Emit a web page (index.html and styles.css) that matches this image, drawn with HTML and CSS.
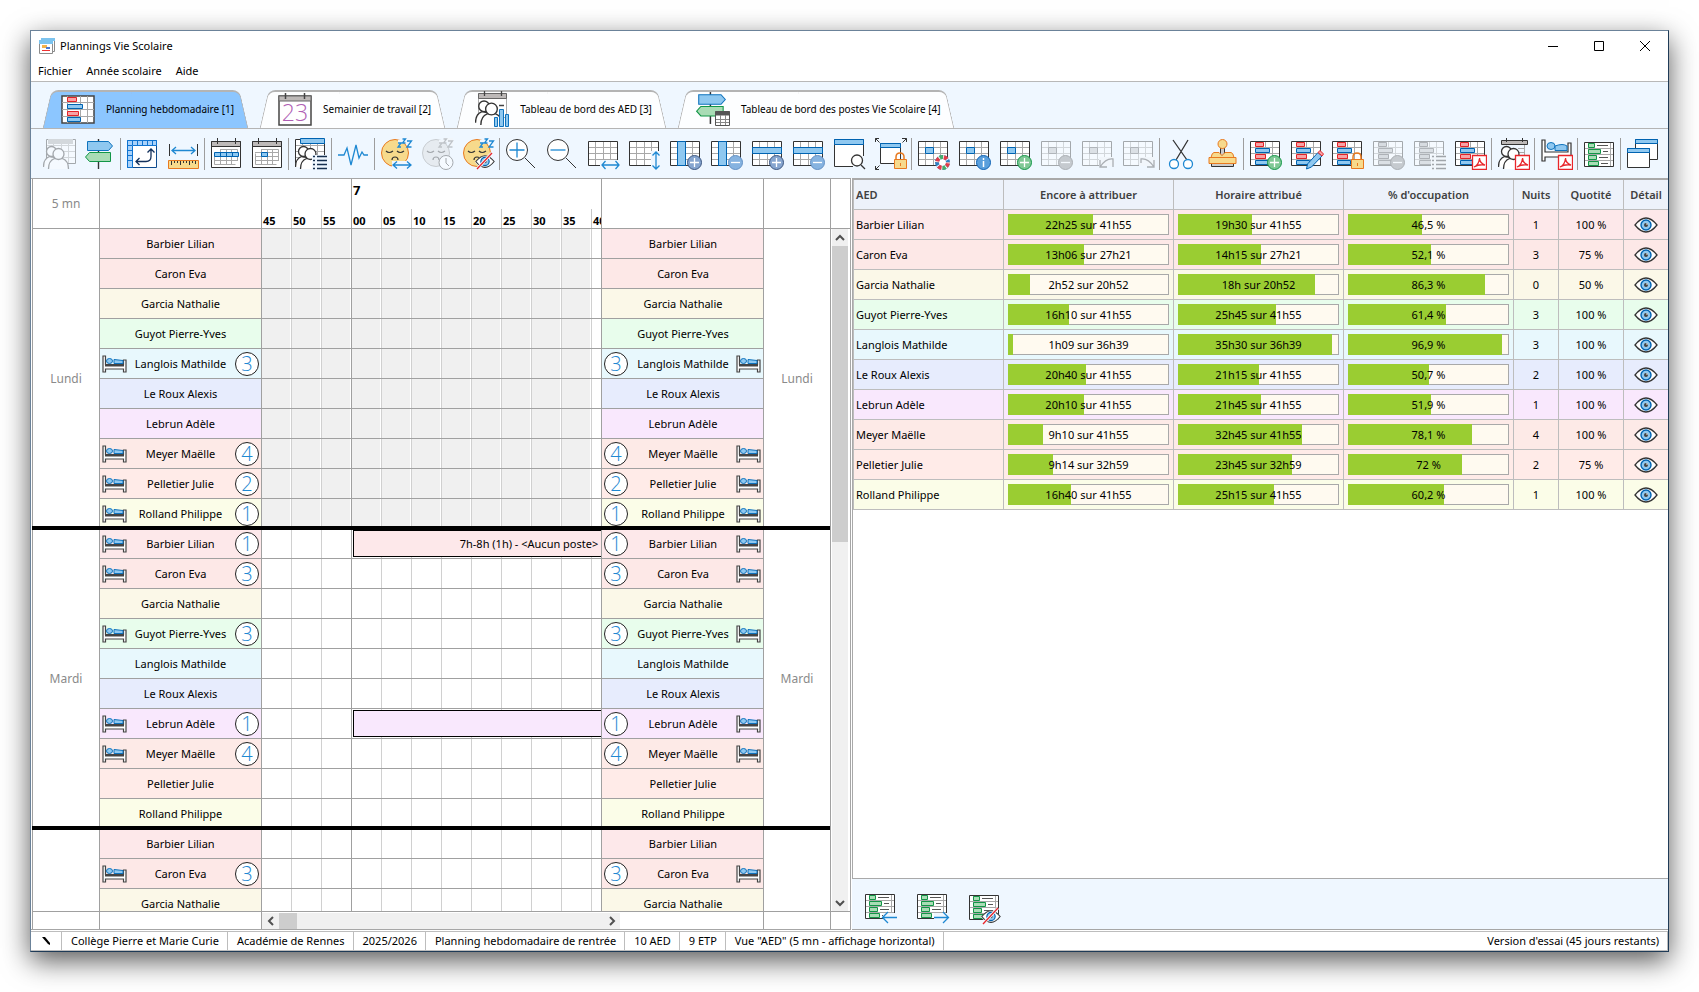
FILE: index.html
```html
<!DOCTYPE html>
<html lang="fr">
<head>
<meta charset="utf-8">
<title>Plannings Vie Scolaire</title>
<link rel="stylesheet" href="styles.css">
</head>
<body>
<svg class="defs" aria-hidden="true">
  <defs>
    <symbol id="grid" viewBox="0 0 32 32"><path fill="#fff" stroke="#333" d="M.5 3.5h29v24H.5z"/><path fill="none" stroke="#a8a8a8" d="M7.5 4v23M15.5 4v23M22.5 4v23M1 9.5h28M1 15.5h28M1 21.5h28"/></symbol>
    <symbol id="gridcell" viewBox="0 0 32 32"><use href="#grid"/><path fill="#8fc8f0" stroke="#0063b1" d="M7.5 9.5h8v6h-8z"/></symbol>
    <symbol id="plan" viewBox="0 0 32 32"><use href="#grid"/><path fill="#f7a3a5" stroke="#e32228" d="M5.5 4.5h8v4h-8zM5.5 16.5h10v4h-10z"/><path fill="#8fc8f0" stroke="#0063b1" d="M5.5 10.5h14v4h-14zM5.5 22.5h13v4h-13z"/></symbol>
    <symbol id="greenlist" viewBox="0 0 32 32"><path fill="#fff" stroke="#333" d="M.5 4.500h29v24H.5z"/><path fill="none" stroke="#a8a8a8" d="M1 10.500h28M1 16.500h28M1 22.500h28M4.500 5v23M26.500 5v23"/><path fill="#a9dcb5" stroke="#129647" d="M4.500 5.500h6v4h-6zM4.500 11.500h12v4h-12zM4.500 17.500h8v4h-8zM4.500 23.500h10v4h-10z"/><path stroke="#555" d="M13 7.500h11M19 13.500h5M15 19.500h9M17 25.500h7"/></symbol>
    <symbol id="cal" viewBox="0 0 32 32"><path fill="#fff" stroke="#333" d="M.5 3.500h29v26H.5z"/><path fill="#bdb9b8" stroke="#333" d="M.5 3.500h29v5H.5z"/><path stroke="#333" d="M6.500 0v6M24.500 0v6"/></symbol>
    <symbol id="people" viewBox="0 0 32 32"><g fill="#fff" stroke="#333" stroke-width="1.300"><path d="M.5 29c0-6 2-9 6-10.500l6 1-5 9.500" stroke-linejoin="round"/><circle cx="8.500" cy="13.500" r="5"/><path d="M5.500 31c0-6 2-9 6-10.500h8c4 1.500 6 4.500 6 10.500"/><circle cx="15.500" cy="16" r="5.500"/></g></symbol>
    <symbol id="sign" viewBox="0 0 32 32"><path stroke="#333" stroke-width="1.400" d="M14.500 1v30"/><path fill="#8fc8f0" stroke="#0f73bd" d="M3.500 3.500h21l4 4.500-4 4.500h-21z"/><path fill="#a9dcb5" stroke="#129647" d="M26.500 14.500h-21l-4 4.500 4 4.500h21z"/></symbol>
    <symbol id="zzz" viewBox="0 0 32 32"><circle cx="14" cy="15" r="13.500" fill="#f7da8c" stroke="#e8791f"/><path fill="none" stroke="#333" stroke-width="1.200" d="M5 13q3 3 7 0M16 13q3 3 7 0M11 22q0-3 3-3t3 3"/><path fill="none" stroke="#eff7ff" stroke-width="4" d="M17 4h5M22 2h7v6"/><path fill="none" stroke="#1e88d2" stroke-width="1.300" d="M17 5h3l-3 4h3M21.500 1h3l-3 4h3M26 3h4.500L26 9h4.500"/></symbol>
    <symbol id="eye" viewBox="0 0 24 16"><path fill="#fff" stroke="#333" stroke-width="1.300" d="M1 8Q12-6 23 8 12 22 1 8z"/><circle cx="12" cy="8" r="5" fill="#8fc8f0" stroke="#0063b1" stroke-width="1.400"/><circle cx="12" cy="8" r="2" fill="#444"/><circle cx="13" cy="7" r=".8" fill="#fff"/></symbol>
    <symbol id="eyeoff" viewBox="0 0 32 32"><path fill="#eff7ff" d="M12 24q10-13 20 0-10 13-20 0z"/><use href="#eye" x="12" y="16" width="20" height="15"/><path stroke="#eff7ff" stroke-width="3" d="M14 31 29 15"/><path stroke="#e8262b" stroke-width="1.300" d="M14 31 29 15"/></symbol>
    <symbol id="lens" viewBox="0 0 32 32"><circle cx="11" cy="12" r="10.500" fill="#fff" stroke="#333"/><path stroke="#333" d="m19 20 10 10"/></symbol>
    <symbol id="lock" viewBox="0 0 32 32"><path fill="none" stroke="#e8791f" stroke-width="1.500" d="M21 22v-3q0-4 4-4t4 4v3"/><path fill="#f7da8c" stroke="#e8791f" d="M19.500 21.500h12v9h-12z"/><path stroke="#e8791f" d="M25.500 25v3"/></symbol>
    <symbol id="pdf" viewBox="0 0 32 32"><path fill="#fff" stroke="#e8262b" stroke-width="1.300" d="M17.500 17.500h14v14h-14z"/><path fill="none" stroke="#e8262b" stroke-width="1.300" d="M19 29q5-2 5.500-9 0 5 5.500 7-6-1-11 2z"/></symbol>
    <symbol id="plus" viewBox="0 0 32 32"><circle cx="24.500" cy="24.500" r="7" fill="#86a5cf" stroke="#3c5680"/><path stroke="#fff" stroke-width="1.300" d="M20 24.500h9M24.500 20v9"/></symbol>
    <symbol id="minus" viewBox="0 0 32 32"><circle cx="24.500" cy="24.500" r="7" fill="#86b3e0" stroke="#6290c4"/><path stroke="#fff" stroke-width="1.300" d="M20 24.500h9"/></symbol>
    <symbol id="gplus" viewBox="0 0 32 32"><circle cx="24.500" cy="24.500" r="7" fill="#80c896" stroke="#129647"/><path stroke="#fff" stroke-width="1.300" d="M20 24.500h9M24.500 20v9"/></symbol>
    <symbol id="list" viewBox="0 0 32 32"><path fill="#eff7ff" d="M17 17h15v15H17z"/><path stroke="#17304f" stroke-width="1.300" d="M18 18.500h2M22 18.500h10M18 22.500h2M22 22.500h10M18 26.500h2M22 26.500h10M18 30.500h2M22 30.500h10"/></symbol>
    <symbol id="bed" viewBox="0 0 26 18"><path fill="#fff" stroke="#444" stroke-width="1.200" d="M1 1h2.500v8.500h18V5H24v12h-2.500v-3h-18v3H1z"/><path stroke="#444" stroke-width="2" d="M3 10.500h19"/><ellipse cx="7.500" cy="6" rx="3" ry="2.500" fill="#8fc8f0" stroke="#0f73bd"/><path fill="#8fc8f0" stroke="#0f73bd" d="M12 8.500v-4l9 1v3z"/></symbol>
  </defs>
</svg>

<div class="window">
  <header class="titlebar">
    <svg class="appicon" viewBox="0 0 16 16"><path fill="#fff" stroke="#8b8b8b" d="M2.500 1.500h13v12h-13z"/><path fill="#7cc3ee" d="M2 0h14v3H2z"/><path fill="#fff" stroke="#8b8b8b" d="M.5 3.500h13v12H.5z"/><path fill="#7cc3ee" d="M0 2h14v4H0z"/><path fill="#f3b24b" d="M3 7h5v3H3z"/><path fill="#4a78d0" d="M7 9h4v2H7z"/><path fill="#e33" d="M3 12h8v1H3z"/></svg>
    <h1>Plannings Vie Scolaire</h1>
    <div class="winbtns">
      <button aria-label="Réduire"><svg viewBox="0 0 12 12"><path stroke="#000" d="M1 6.500h10"/></svg></button>
      <button aria-label="Agrandir"><svg viewBox="0 0 12 12"><path fill="none" stroke="#000" d="M1.500 1.500h9v9h-9z"/></svg></button>
      <button aria-label="Fermer"><svg viewBox="0 0 12 12"><path stroke="#000" d="m1 1 10 10M11 1 1 11"/></svg></button>
    </div>
  </header>
  <nav class="menubar"><button>Fichier</button><button>Année scolaire</button><button>Aide</button></nav>

  <div class="tabs" role="tablist">
    <button class="tab active" role="tab" aria-selected="true"><svg viewBox="0 0 34 36"><path fill="#fff" stroke="#444" stroke-width="1.500" d="M1 5h32v27H1z"/><path stroke="#a8a8a8" d="M1 11.500h32M1 18.500h32M1 25.500h32M6.500 5v27M19.500 5v27M26.500 5v27"/><path fill="#f7a3a5" stroke="#e32228" d="M6.500 6.500h9v4h-9zM6.500 20.500h11v4h-11z"/><path fill="#8fc8f0" stroke="#0063b1" d="M6.500 13.500h15v4h-15zM6.500 26.500h13v4h-13z"/></svg><span>Planning hebdomadaire [1]</span></button>
    <button class="tab" role="tab"><svg viewBox="0 0 34 36"><path fill="#fff" stroke="#444" stroke-width="1.500" d="M1 5h32v29H1z"/><path fill="#bdb9b8" stroke="#666" d="M1 5h32v5H1z"/><path stroke="#444" stroke-width="1.500" d="M7.500 2v6M26.500 2v6"/><text class="daynum" x="17" y="30" text-anchor="middle">23</text></svg><span>Semainier de travail [2]</span></button>
    <button class="tab" role="tab"><svg viewBox="0 0 34 36"><path fill="#fff" stroke="#aaa" d="M3.500 2.500h28v24h-28z"/><path fill="#bdb9b8" stroke="#666" d="M3.500 2.500h28v5h-28z"/><path stroke="#444" stroke-width="1.300" d="M9.500 0v5M26.500 0v5M24 14.500h5"/><use href="#people" x="0" y="1" width="34" height="34"/><path fill="#8fc8f0" stroke="#0f73bd" d="M19.500 26.500h3v9h-3zM24.500 18.500h4v17h-4zM30.500 23.500h3v12h-3z"/></svg><span>Tableau de bord des AED [3]</span></button>
    <button class="tab" role="tab"><svg viewBox="0 0 34 36"><use href="#sign" x="-1" y="0" width="34" height="34"/><path fill="#fff" stroke="#555" d="M19.500 20.500h14v14h-14z"/><path stroke="#555" stroke-width="4" d="M19 22.500h15"/><path stroke="#888" d="M24.500 24v10M29.500 24v10M20 28.500h13M20 31.500h13"/></svg><span>Tableau de bord des postes Vie Scolaire [4]</span></button>
  </div>

  <div class="toolbar" role="toolbar">
    <button class="tool" disabled aria-label="Calendrier AED"><svg viewBox="0 0 32 32"><use href="#grid" x="3" y="-2"/><path fill="#aaa" d="M5 1h25v5H5z"/><use href="#people"/></svg></button>
    <button class="tool" aria-label="Postes"><svg viewBox="0 0 32 32"><use href="#sign"/></svg></button>
    <i class="sep"></i>
    <button class="tool" aria-label="Transposer"><svg viewBox="0 0 32 32"><path fill="#fff" stroke="#0f4c8f" d="M.5 2.500h29v27H.5z"/><path fill="#a9d2fa" stroke="#0f73d0" d="M.5 2.500h29v5H5.500v22h-5zM5.500 3v4M10.500 3v4M15.500 3v4M20.500 3v4M25.500 3v4M1 12.500h4M1 17.500h4M1 22.500h4M1 7.500h4"/><path fill="none" stroke="#12305c" stroke-width="1.300" d="M9 23.500h10q5 0 5-5V11M12.500 20 9 23.500l3.500 3.500M20.500 14.500 24 11l3.500 3.500"/></svg></button>
    <button class="tool" aria-label="Largeur"><svg viewBox="0 0 32 32"><path stroke="#333" d="M1.500 6v12M29.500 6v12"/><path fill="none" stroke="#1e88d2" stroke-width="1.300" d="M4 12.500h23M8 9l-4 3.500L8 16M23 9l4 3.500-4 3.500"/><path fill="#f7da8c" stroke="#e8791f" d="M.5 22.500h30v8H.5z"/><path stroke="#333" d="M3.500 23v4M6.500 23v2M9.500 23v2M12.500 23v4M15.500 23v2M18.500 23v2M21.500 23v4M24.500 23v2M27.500 23v3"/></svg></button>
    <i class="sep"></i>
    <button class="tool" aria-label="Semaine"><svg viewBox="0 0 32 32"><use href="#cal"/><path fill="none" stroke="#a8a8a8" d="M3.500 15.500v11h21M9.500 11.500h17v11M9.500 11v15M15.500 11v15M20.500 11v15M3 22.500h24"/><path fill="#8fc8f0" stroke="#0063b1" d="M3.500 14.500h24v4h-24zM9.500 14v5M15.500 14v5M21.500 14v5"/></svg></button>
    <button class="tool" aria-label="Jour"><svg viewBox="0 0 32 32"><use href="#cal"/><path fill="none" stroke="#a8a8a8" d="M3.500 15.500v11h21M9.500 11.500h17v11M9.500 11v15M15.500 11v15M20.500 11v15M3 18.500h24M3 22.500h24M3 14.500h24"/><path fill="#8fc8f0" stroke="#0063b1" d="M9.500 14.500h6v4h-6z"/></svg></button>
    <i class="sep"></i>
    <button class="tool" aria-label="Liste des AED"><svg viewBox="0 0 32 32"><use href="#grid" x="0" y="-2"/><path fill="#8fc8f0" stroke="#0063b1" d="M5.500.5h24v5h-24z"/><use href="#people"/><use href="#list"/></svg></button>
    <i class="sep"></i>
    <button class="tool" aria-label="Courbe"><svg viewBox="0 0 32 32"><path fill="none" stroke="#1e88d2" stroke-width="1.300" d="M0 17h6l3-7 4 17 5-20 3 13 3-6 2 3h4"/></svg></button>
    <i class="sep"></i>
    <button class="tool" aria-label="Pause"><svg viewBox="0 0 32 32"><use href="#zzz"/><path fill="#eff7ff" d="M11 23h21v8H11z"/><path fill="none" stroke="#1e88d2" stroke-width="1.300" d="M12 27h18M16 23.500 12 27l4 3.500M26 23.500l4 3.500-4 3.500"/></svg></button>
    <button class="tool" disabled aria-label="Durée de pause"><svg viewBox="0 0 32 32"><use href="#zzz"/><circle cx="24" cy="24.500" r="7" fill="#fff" stroke="#333"/><path fill="none" stroke="#333" d="M24 20v5l3 3"/></svg></button>
    <button class="tool" aria-label="Masquer les pauses"><svg viewBox="0 0 32 32"><use href="#zzz"/><use href="#eyeoff"/></svg></button>
    <i class="sep"></i>
    <button class="tool" aria-label="Zoom avant"><svg viewBox="0 0 32 32"><use href="#lens"/><path stroke="#1e88d2" stroke-width="1.300" d="M3.500 12h15M11 4.500v15"/></svg></button>
    <button class="tool" aria-label="Zoom arrière"><svg viewBox="0 0 32 32"><use href="#lens"/><path stroke="#1e88d2" stroke-width="1.300" d="M3.500 12h15"/></svg></button>
    <button class="tool" aria-label="Ajuster la largeur"><svg viewBox="0 0 32 32"><use href="#grid"/><path fill="#eff7ff" d="M12 22h20v9H12z"/><path fill="none" stroke="#1e88d2" stroke-width="1.300" d="M14 27h17M17.500 23 14 27l3.500 4M27.500 23l3.500 4-3.500 4"/></svg></button>
    <button class="tool" aria-label="Ajuster la hauteur"><svg viewBox="0 0 32 32"><use href="#grid"/><path fill="#eff7ff" d="M22 13h10v19H22z"/><path fill="none" stroke="#1e88d2" stroke-width="1.300" d="M27 14v17M23.500 17.500 27 14l3.500 3.500M23.500 27.500 27 31l3.500-3.500"/></svg></button>
    <button class="tool" aria-label="Élargir les colonnes"><svg viewBox="0 0 32 32"><use href="#grid"/><path fill="#8fc8f0" stroke="#0063b1" d="M7.500 3.500h8v24h-8z"/><use href="#plus"/></svg></button>
    <button class="tool" aria-label="Réduire les colonnes"><svg viewBox="0 0 32 32"><use href="#grid"/><path fill="#8fc8f0" stroke="#0063b1" d="M7.500 3.500h8v24h-8z"/><use href="#minus"/></svg></button>
    <button class="tool" aria-label="Agrandir les lignes"><svg viewBox="0 0 32 32"><use href="#grid"/><path fill="#8fc8f0" stroke="#0063b1" d="M.5 9.500h29v6H.5z"/><use href="#plus"/></svg></button>
    <button class="tool" aria-label="Réduire les lignes"><svg viewBox="0 0 32 32"><use href="#grid"/><path fill="#8fc8f0" stroke="#0063b1" d="M.5 9.500h29v6H.5z"/><use href="#minus"/></svg></button>
    <button class="tool" aria-label="Aperçu"><svg viewBox="0 0 32 32"><path fill="#fff" stroke="#333" d="M.5 1.500h29v27H.5z"/><path fill="#8fc8f0" stroke="#0063b1" d="M.5 1.500h29v5H.5z"/><path fill="#eff7ff" d="M19 27h13v5H19zM28 18h4v14h-4z"/><circle cx="23" cy="22.500" r="5.500" fill="#fff" stroke="#333" stroke-width="1.300"/><path stroke="#333" stroke-width="1.300" d="m27 27 4 4"/></svg></button>
    <button class="tool" aria-label="Verrouiller la taille"><svg viewBox="0 0 32 32"><path fill="#fff" stroke="#333" d="M5.500 5.500h20v20h-20z"/><path fill="#8fc8f0" stroke="#0063b1" d="M5.500 5.500h20v4h-20z"/><path fill="none" stroke="#333" d="M.5 4V.5H4M.5.5l4 4M27 .5h4.500V4M31.500.5l-4 4M.5 28v3.500H4M.5 31.500l4-4"/><use href="#lock"/></svg></button>
    <i class="sep"></i>
    <button class="tool" aria-label="Couleurs"><svg viewBox="0 0 32 32"><use href="#gridcell"/><circle cx="24.500" cy="24.500" r="5.500" fill="#fff" stroke="#2e7fc2" stroke-width="4"/><circle cx="24.500" cy="24.500" r="5.500" fill="none" stroke="#e23b49" stroke-width="4" stroke-dasharray="4.320 4.320"/><circle cx="24.500" cy="24.500" r="5.500" fill="none" stroke="#45ad6a" stroke-width="4" stroke-dasharray="4.320 12.960" stroke-dashoffset="-4.320"/><circle cx="24.500" cy="24.500" r="5.500" fill="none" stroke="#fff" stroke-width="4" stroke-dasharray=".8 3.520"/></svg></button>
    <button class="tool" aria-label="Informations"><svg viewBox="0 0 32 32"><use href="#gridcell"/><circle cx="24.500" cy="24.500" r="7" fill="#5a9fdc" stroke="#0f63b5"/><path stroke="#fff" stroke-width="1.500" d="M24.500 20v2M24.500 23v6"/></svg></button>
    <button class="tool" aria-label="Ajouter"><svg viewBox="0 0 32 32"><use href="#gridcell"/><use href="#gplus"/></svg></button>
    <button class="tool" disabled aria-label="Supprimer"><svg viewBox="0 0 32 32"><use href="#gridcell"/><circle cx="24.500" cy="24.500" r="7" fill="#888" stroke="#444"/><path stroke="#fff" stroke-width="1.300" d="M20 24.500h9"/></svg></button>
    <button class="tool" disabled aria-label="Annuler"><svg viewBox="0 0 32 32"><use href="#gridcell"/><path fill="#eff7ff" d="M17 19h15v9H17z"/><path fill="none" stroke="#444" stroke-width="1.300" d="M18 22v7h7M18 29q6-9 13-8v8"/></svg></button>
    <button class="tool" disabled aria-label="Rétablir"><svg viewBox="0 0 32 32"><use href="#gridcell"/><path fill="#eff7ff" d="M16 19h16v9H16z"/><path fill="none" stroke="#444" stroke-width="1.300" d="M31 22v7h-7M31 29q-6-9-13-8v4"/></svg></button>
    <i class="sep"></i>
    <button class="tool" aria-label="Couper"><svg viewBox="0 0 32 32"><path stroke="#333" stroke-width="1.300" d="M7 2l14 20M22 2 10 22"/><circle cx="8" cy="26" r="4.500" fill="#fff" stroke="#1e88d2" stroke-width="1.300"/><circle cx="22" cy="26" r="4.500" fill="#fff" stroke="#1e88d2" stroke-width="1.300"/></svg></button>
    <button class="tool" aria-label="Tampon"><svg viewBox="0 0 32 32"><path fill="#ccc" stroke="#333" d="M4.500 23.500h22v5h-22zM13.500 9.500h4v8h-4z"/><circle cx="15.500" cy="6" r="4.500" fill="#f7da8c" stroke="#e8791f"/><path fill="#f7da8c" stroke="#e8791f" d="M7 14.500h5l3 3 3-3h6q2 0 3 5h2v6H2v-6h2q1-5 3-5zM4 19.500h23"/></svg></button>
    <i class="sep"></i>
    <button class="tool" aria-label="Nouveau planning"><svg viewBox="0 0 32 32"><use href="#plan"/><use href="#gplus"/></svg></button>
    <button class="tool" aria-label="Modifier le planning"><svg viewBox="0 0 32 32"><use href="#plan"/><path fill="#8fc8f0" stroke="#0063b1" d="m15.500 31 1-5L27 14.500l4 3.500-10.500 11z"/><path fill="#f7a3a5" stroke="#e32228" d="m27 14.500 2-2 3.500 3.500L31 18z"/></svg></button>
    <button class="tool" aria-label="Verrouiller le planning"><svg viewBox="0 0 32 32"><use href="#plan"/><use href="#lock"/></svg></button>
    <button class="tool" disabled aria-label="Supprimer le planning"><svg viewBox="0 0 32 32"><use href="#plan"/><circle cx="24.500" cy="24.500" r="7" fill="#888" stroke="#444"/><path stroke="#fff" stroke-width="1.300" d="M20 24.500h9"/></svg></button>
    <button class="tool" disabled aria-label="Liste des plannings"><svg viewBox="0 0 32 32"><use href="#plan"/><use href="#list"/></svg></button>
    <button class="tool" aria-label="Planning en PDF"><svg viewBox="0 0 32 32"><use href="#plan"/><use href="#pdf"/></svg></button>
    <i class="sep"></i>
    <button class="tool" aria-label="AED en PDF"><svg viewBox="0 0 32 32"><path fill="#bdb9b8" stroke="#333" d="M3.500 2.500h26v4h-26z"/><path stroke="#333" d="M8.500 0v4M24.500 0v4"/><path fill="none" stroke="#a8a8a8" d="M26.500 7v10M20 10.500h6M20 14.500h6"/><use href="#people"/><use href="#pdf"/></svg></button>
    <i class="sep"></i>
    <button class="tool" aria-label="Nuits en PDF"><svg viewBox="0 0 32 32"><path fill="#fff" stroke="#333" stroke-width="1.200" d="M1 2h3v12h23V5h3v14H4v4H1z"/><ellipse cx="10" cy="8" rx="4" ry="3.500" fill="#8fc8f0" stroke="#0f73bd"/><path fill="#8fc8f0" stroke="#0f73bd" d="M14 12.500V8q8-3 12 0v4.500z"/><use href="#pdf"/></svg></button>
    <i class="sep"></i>
    <button class="tool" aria-label="Tableau"><svg viewBox="0 0 32 32"><use href="#greenlist"/></svg></button>
    <i class="sep"></i>
    <button class="tool" aria-label="Fenêtres"><svg viewBox="0 0 32 32"><path fill="#fff" stroke="#333" d="M8.500 1.500h22v20h-22z"/><path fill="#8fc8f0" stroke="#0063b1" d="M8.500 1.500h22v4h-22z"/><path fill="#fff" stroke="#333" d="M.5 10.500h22v19H.5z"/><path fill="#8fc8f0" stroke="#0063b1" d="M.5 10.500h22v4H.5z"/></svg></button>
  </div>

  <main class="panels">
    <section class="planner">
      <div class="cols phead">
        <div class="c day">5 mn</div><div class="c"></div>
        <div class="c times">
          <div class="tick"><b>45</b></div><div class="tick"><b>50</b></div><div class="tick"><b>55</b></div><div class="tick hour"><strong>7</strong><b>00</b></div><div class="tick"><b>05</b></div><div class="tick"><b>10</b></div><div class="tick"><b>15</b></div><div class="tick"><b>20</b></div><div class="tick"><b>25</b></div><div class="tick"><b>30</b></div><div class="tick"><b>35</b></div><div class="tick"><b>40</b></div>
        </div>
        <div class="c"></div><div class="c"></div><div class="c"></div>
      </div>
      <div class="pbody">
        <div class="days">
          <div class="dayrow closed">
            <div class="c day">Lundi</div>
            <div class="c names">
              <div class="p1"><span>Barbier Lilian</span></div><div class="p2"><span>Caron Eva</span></div><div class="p3"><span>Garcia Nathalie</span></div><div class="p4"><span>Guyot Pierre-Yves</span></div>
              <div class="p5"><svg class="bed"><use href="#bed"/></svg><span>Langlois Mathilde</span><em>3</em></div>
              <div class="p6"><span>Le Roux Alexis</span></div><div class="p7"><span>Lebrun Adèle</span></div>
              <div class="p8"><svg class="bed"><use href="#bed"/></svg><span>Meyer Maëlle</span><em>4</em></div>
              <div class="p9"><svg class="bed"><use href="#bed"/></svg><span>Pelletier Julie</span><em>2</em></div>
              <div class="p10"><svg class="bed"><use href="#bed"/></svg><span>Rolland Philippe</span><em>1</em></div>
            </div>
            <div class="c lanes"><div></div><div></div><div></div><div></div><div></div><div></div><div></div><div></div><div></div><div></div></div>
            <div class="c names flip">
              <div class="p1"><span>Barbier Lilian</span></div><div class="p2"><span>Caron Eva</span></div><div class="p3"><span>Garcia Nathalie</span></div><div class="p4"><span>Guyot Pierre-Yves</span></div>
              <div class="p5"><svg class="bed"><use href="#bed"/></svg><span>Langlois Mathilde</span><em>3</em></div>
              <div class="p6"><span>Le Roux Alexis</span></div><div class="p7"><span>Lebrun Adèle</span></div>
              <div class="p8"><svg class="bed"><use href="#bed"/></svg><span>Meyer Maëlle</span><em>4</em></div>
              <div class="p9"><svg class="bed"><use href="#bed"/></svg><span>Pelletier Julie</span><em>2</em></div>
              <div class="p10"><svg class="bed"><use href="#bed"/></svg><span>Rolland Philippe</span><em>1</em></div>
            </div>
            <div class="c day">Lundi</div>
          </div>
          <div class="dayrow">
            <div class="c day">Mardi</div>
            <div class="c names">
              <div class="p1"><svg class="bed"><use href="#bed"/></svg><span>Barbier Lilian</span><em>1</em></div>
              <div class="p2"><svg class="bed"><use href="#bed"/></svg><span>Caron Eva</span><em>3</em></div>
              <div class="p3"><span>Garcia Nathalie</span></div>
              <div class="p4"><svg class="bed"><use href="#bed"/></svg><span>Guyot Pierre-Yves</span><em>3</em></div>
              <div class="p5"><span>Langlois Mathilde</span></div><div class="p6"><span>Le Roux Alexis</span></div>
              <div class="p7"><svg class="bed"><use href="#bed"/></svg><span>Lebrun Adèle</span><em>1</em></div>
              <div class="p8"><svg class="bed"><use href="#bed"/></svg><span>Meyer Maëlle</span><em>4</em></div>
              <div class="p9"><span>Pelletier Julie</span></div><div class="p10"><span>Rolland Philippe</span></div>
            </div>
            <div class="c lanes"><div><p class="event p1">7h-8h (1h) - &lt;Aucun poste&gt;</p></div><div></div><div></div><div></div><div></div><div></div><div><p class="event p7"></p></div><div></div><div></div><div></div></div>
            <div class="c names flip">
              <div class="p1"><svg class="bed"><use href="#bed"/></svg><span>Barbier Lilian</span><em>1</em></div>
              <div class="p2"><svg class="bed"><use href="#bed"/></svg><span>Caron Eva</span><em>3</em></div>
              <div class="p3"><span>Garcia Nathalie</span></div>
              <div class="p4"><svg class="bed"><use href="#bed"/></svg><span>Guyot Pierre-Yves</span><em>3</em></div>
              <div class="p5"><span>Langlois Mathilde</span></div><div class="p6"><span>Le Roux Alexis</span></div>
              <div class="p7"><svg class="bed"><use href="#bed"/></svg><span>Lebrun Adèle</span><em>1</em></div>
              <div class="p8"><svg class="bed"><use href="#bed"/></svg><span>Meyer Maëlle</span><em>4</em></div>
              <div class="p9"><span>Pelletier Julie</span></div><div class="p10"><span>Rolland Philippe</span></div>
            </div>
            <div class="c day">Mardi</div>
          </div>
          <div class="dayrow">
            <div class="c day"></div>
            <div class="c names">
              <div class="p1"><span>Barbier Lilian</span></div>
              <div class="p2"><svg class="bed"><use href="#bed"/></svg><span>Caron Eva</span><em>3</em></div>
              <div class="p3"><span>Garcia Nathalie</span></div>
            </div>
            <div class="c lanes"><div></div><div></div><div></div></div>
            <div class="c names flip">
              <div class="p1"><span>Barbier Lilian</span></div>
              <div class="p2"><svg class="bed"><use href="#bed"/></svg><span>Caron Eva</span><em>3</em></div>
              <div class="p3"><span>Garcia Nathalie</span></div>
            </div>
            <div class="c day"></div>
          </div>
        </div>
        <div class="vscroll"><button aria-label="Haut"><svg viewBox="0 0 10 10"><path d="m1 7 4-4 4 4"/></svg></button><div class="thumb"></div><button aria-label="Bas"><svg viewBox="0 0 10 10"><path d="m1 3 4 4 4-4"/></svg></button></div>
      </div>
      <div class="pfoot">
        <div class="c"></div><div class="c"></div>
        <div class="c"><div class="hscroll"><button aria-label="Gauche"><svg viewBox="0 0 10 10"><path d="M7 1 3 5l4 4"/></svg></button><div class="thumb"></div><button aria-label="Droite"><svg viewBox="0 0 10 10"><path d="m3 1 4 4-4 4"/></svg></button></div></div>
        <div class="c"></div><div class="c"></div>
      </div>
    </section>

    <section class="summary">
      <div class="tablebox">
        <table>
          <colgroup><col class="w-name"><col><col><col><col class="w-n"><col class="w-q"><col class="w-d"></colgroup>
          <thead><tr><th class="l">AED</th><th>Encore à attribuer</th><th>Horaire attribué</th><th>% d'occupation</th><th>Nuits</th><th>Quotité</th><th>Détail</th></tr></thead>
          <tbody>
            <tr class="p1"><td class="l">Barbier Lilian</td><td><div class="bar"><i style="width:53.5%"></i><span>22h25 sur 41h55</span></div></td><td><div class="bar"><i style="width:46.5%"></i><span>19h30 sur 41h55</span></div></td><td><div class="bar"><i style="width:46.5%"></i><span>46,5 %</span></div></td><td>1</td><td>100 %</td><td><button aria-label="Détail"><svg><use href="#eye"/></svg></button></td></tr>
            <tr class="p2"><td class="l">Caron Eva</td><td><div class="bar"><i style="width:47.9%"></i><span>13h06 sur 27h21</span></div></td><td><div class="bar"><i style="width:52.1%"></i><span>14h15 sur 27h21</span></div></td><td><div class="bar"><i style="width:52.1%"></i><span>52,1 %</span></div></td><td>3</td><td>75 %</td><td><button aria-label="Détail"><svg><use href="#eye"/></svg></button></td></tr>
            <tr class="p3"><td class="l">Garcia Nathalie</td><td><div class="bar"><i style="width:13.7%"></i><span>2h52 sur 20h52</span></div></td><td><div class="bar"><i style="width:86.3%"></i><span>18h sur 20h52</span></div></td><td><div class="bar"><i style="width:86.3%"></i><span>86,3 %</span></div></td><td>0</td><td>50 %</td><td><button aria-label="Détail"><svg><use href="#eye"/></svg></button></td></tr>
            <tr class="p4"><td class="l">Guyot Pierre-Yves</td><td><div class="bar"><i style="width:38.6%"></i><span>16h10 sur 41h55</span></div></td><td><div class="bar"><i style="width:61.4%"></i><span>25h45 sur 41h55</span></div></td><td><div class="bar"><i style="width:61.4%"></i><span>61,4 %</span></div></td><td>3</td><td>100 %</td><td><button aria-label="Détail"><svg><use href="#eye"/></svg></button></td></tr>
            <tr class="p5"><td class="l">Langlois Mathilde</td><td><div class="bar"><i style="width:3.1%"></i><span>1h09 sur 36h39</span></div></td><td><div class="bar"><i style="width:96.9%"></i><span>35h30 sur 36h39</span></div></td><td><div class="bar"><i style="width:96.9%"></i><span>96,9 %</span></div></td><td>3</td><td>100 %</td><td><button aria-label="Détail"><svg><use href="#eye"/></svg></button></td></tr>
            <tr class="p6"><td class="l">Le Roux Alexis</td><td><div class="bar"><i style="width:49.3%"></i><span>20h40 sur 41h55</span></div></td><td><div class="bar"><i style="width:50.7%"></i><span>21h15 sur 41h55</span></div></td><td><div class="bar"><i style="width:50.7%"></i><span>50,7 %</span></div></td><td>2</td><td>100 %</td><td><button aria-label="Détail"><svg><use href="#eye"/></svg></button></td></tr>
            <tr class="p7"><td class="l">Lebrun Adèle</td><td><div class="bar"><i style="width:48.1%"></i><span>20h10 sur 41h55</span></div></td><td><div class="bar"><i style="width:51.9%"></i><span>21h45 sur 41h55</span></div></td><td><div class="bar"><i style="width:51.9%"></i><span>51,9 %</span></div></td><td>1</td><td>100 %</td><td><button aria-label="Détail"><svg><use href="#eye"/></svg></button></td></tr>
            <tr class="p8"><td class="l">Meyer Maëlle</td><td><div class="bar"><i style="width:21.9%"></i><span>9h10 sur 41h55</span></div></td><td><div class="bar"><i style="width:78.1%"></i><span>32h45 sur 41h55</span></div></td><td><div class="bar"><i style="width:78.1%"></i><span>78,1 %</span></div></td><td>4</td><td>100 %</td><td><button aria-label="Détail"><svg><use href="#eye"/></svg></button></td></tr>
            <tr class="p9"><td class="l">Pelletier Julie</td><td><div class="bar"><i style="width:28%"></i><span>9h14 sur 32h59</span></div></td><td><div class="bar"><i style="width:72%"></i><span>23h45 sur 32h59</span></div></td><td><div class="bar"><i style="width:72%"></i><span>72 %</span></div></td><td>2</td><td>75 %</td><td><button aria-label="Détail"><svg><use href="#eye"/></svg></button></td></tr>
            <tr class="p10"><td class="l">Rolland Philippe</td><td><div class="bar"><i style="width:39.8%"></i><span>16h40 sur 41h55</span></div></td><td><div class="bar"><i style="width:60.2%"></i><span>25h15 sur 41h55</span></div></td><td><div class="bar"><i style="width:60.2%"></i><span>60,2 %</span></div></td><td>1</td><td>100 %</td><td><button aria-label="Détail"><svg><use href="#eye"/></svg></button></td></tr>
          </tbody>
        </table>
      </div>
      <div class="actions">
        <button aria-label="Précédent"><svg viewBox="0 0 32 32"><use href="#greenlist" y="-3"/><path fill="#eff7ff" d="M18 20h14v12H18z"/><path fill="none" stroke="#1e88d2" stroke-width="1.300" d="M17 24.500h15M23 19l-5.500 5.500L23 30"/></svg></button>
        <button aria-label="Suivant"><svg viewBox="0 0 32 32"><use href="#greenlist" y="-3"/><path fill="#eff7ff" d="M17 20h15v12H17z"/><path fill="none" stroke="#1e88d2" stroke-width="1.300" d="M17 24.500h14M26 19l5.500 5.500L26 30"/></svg></button>
        <button aria-label="Masquer"><svg viewBox="0 0 32 32"><use href="#greenlist" y="-2"/><use href="#eyeoff"/></svg></button>
      </div>
    </section>
  </main>

  <footer class="status">
    <div class="pen"><svg viewBox="0 0 10 10"><path fill="#000" d="m1 1 3 0 5 6v2L7 8z"/></svg></div><div>Collège Pierre et Marie Curie</div><div>Académie de Rennes</div><div>2025/2026</div><div>Planning hebdomadaire de rentrée</div><div>10 AED</div><div>9 ETP</div><div>Vue "AED" (5 mn - affichage horizontal)</div><div class="version">Version d'essai (45 jours restants)</div>
  </footer>
</div>
</body>
</html>
```
FILE: styles.css
```css
* { box-sizing: border-box; }
body {
  margin: 0;
  height: 100vh;
  padding: 30px 30px 40px;
  background: #fff;
  font: 11px/16px "Noto Sans", "Open Sans", sans-serif;
  color: #000;
  overflow: hidden;
}
button { font: inherit; color: inherit; border: 0; padding: 0; background: none; }
svg { display: block; overflow: visible; }
.defs { position: absolute; width: 0; height: 0; }

.window {
  height: 100%;
  display: flex;
  flex-direction: column;
  background: #fff;
  border: 1px solid #6b8299;
  border-right-color: #1f3b57;
  border-bottom-color: #1f3b57;
  box-shadow: 0 9px 26px rgba(0, 0, 0, .65);
}

.titlebar { display: flex; align-items: center; height: 30px; padding-left: 8px; }
.appicon { width: 16px; height: 16px; }
h1 { margin: 0 0 0 5px; font-size: 11px; font-weight: 400; }
.winbtns { display: flex; margin-left: auto; }
.winbtns button { width: 46px; height: 30px; display: grid; place-items: center; }
.winbtns svg { width: 12px; height: 12px; }
.menubar { display: flex; gap: 14px; height: 21px; padding-left: 7px; border-bottom: 1px solid #b8b8b8; }

/* Tabs */
.tabs {
  display: flex;
  align-items: flex-end;
  gap: 12px;
  height: 47px;
  padding-left: 12px;
  background: #eff7ff;
  border-bottom: 1px solid #b4b4b4;
}
.tab {
  position: relative;
  z-index: 0;
  display: flex;
  align-items: center;
  gap: 11px;
  height: 38px;
  padding: 0 14px 0 18px;
  font-size: 10px;
  --fill: #fdfeff;
}
.tab.active { --fill: #8cc6ff; }
.tab::before, .tab::after {
  content: "";
  position: absolute;
  z-index: -1;
  top: 0;
  bottom: 0;
  background: var(--fill);
  border-top: 2px solid #b4b4b4;
}
.tab::before { left: 4px; right: 50%; border-left: 1px solid #b4b4b4; border-top-left-radius: 7px; transform: skewX(-13deg); }
.tab::after { left: 45%; right: 4px; border-right: 1px solid #b4b4b4; border-top-right-radius: 7px; transform: skewX(13deg); }
.tab svg { width: 34px; height: 36px; }
.daynum { font: 300 23px "Open Sans", sans-serif; fill: #b05fb5; }

/* Toolbar */
.toolbar { display: flex; align-items: center; height: 49px; padding-left: 7px; background: #eff7ff; }
.tool { flex: none; padding: 0 4px 0 5px; }
.tool svg { width: 32px; height: 32px; }
.tool:disabled svg { filter: grayscale(1); opacity: .4; }
.sep { flex: none; width: 2px; height: 32px; border-left: 1px solid #9d9d9d; }

.panels {
  flex: 1;
  min-height: 0;
  display: grid;
  grid-template-columns: 205fr 204fr;
  gap: 1px;
}

/* People colours */
.p1 { background: #fde8ea; }
.p2 { background: #fde8e7; }
.p3 { background: #fbf8e8; }
.p4 { background: #e8fdec; }
.p5 { background: #e8f8fd; }
.p6 { background: #e7ecfd; }
.p7 { background: #f9e8fd; }
.p8 { background: #fdeae7; }
.p9 { background: #ffebe8; }
.p10 { background: #fbfde8; }

/* Planner */
.planner {
  min-width: 0;
  min-height: 0;
  display: flex;
  flex-direction: column;
  padding-left: 1px;
  border: solid #a6a6a6;
  border-width: 1px 1px 1px 0;
}
.c { border-left: 1px solid #a0a0a0; min-width: 0; }
.cols { display: grid; grid-template-columns: 67px 162px minmax(0, 1fr) 162px 67px 20px; }
.dayrow { display: grid; grid-template-columns: 67px 162px minmax(0, 1fr) 162px 67px; }
.day { display: grid; place-items: center; color: #8a8a8a; font-size: 12px; }
.phead { height: 50px; border-bottom: 1px solid #a0a0a0; flex: none; }
.times { display: flex; overflow: hidden; }
.tick { flex: none; width: 30px; height: 19px; align-self: flex-end; border-left: 1px solid #c6c6c6; padding-left: 1px; }
.tick:first-child { width: 29px; border-left: 0; }
.tick.hour { display: flex; flex-direction: column; justify-content: space-between; height: 49px; border-left-color: #a0a0a0; }
.tick b, .tick strong { display: block; line-height: 22px; }
.tick b { line-height: 23px; font-size: 11px; }
.tick.hour b { line-height: 15px; }
.tick strong { font-size: 13px; }

.pbody { flex: 1; min-height: 0; display: flex; border-bottom: 1px solid #a0a0a0; }
.days { flex: 1; min-width: 0; overflow: hidden; }
.dayrow { position: relative; }
.dayrow + .dayrow::before {
  content: "";
  position: absolute;
  z-index: 1;
  top: -3px;
  left: 0;
  right: 0;
  height: 4px;
  background: #000;
}
.names > div {
  height: 30px;
  display: grid;
  grid-template-columns: 26px 1fr 26px;
  align-items: center;
  padding: 0 2px;
  border-bottom: 1px solid #a0a0a0;
}
.names span { grid-column: 2; grid-row: 1; text-align: center; white-space: nowrap; }
.names .bed { grid-column: 1; grid-row: 1; width: 26px; height: 18px; }
.names em {
  grid-column: 3;
  grid-row: 1;
  width: 24px;
  height: 24px;
  border: 1px solid #222;
  border-radius: 50%;
  background: #fff;
  color: #1e88d2;
  font: 300 20px/22px "Open Sans", sans-serif;
  text-align: center;
  justify-self: end;
}
.names.flip > div { padding: 0 1px 0 2px; }
.names.flip .bed { grid-column: 3; }
.names.flip em { grid-column: 1; justify-self: start; }
.lanes {
  overflow: hidden;
  background:
    linear-gradient(90deg, transparent 89px, #a0a0a0 89px 90px, transparent 90px),
    repeating-linear-gradient(90deg, transparent 0 29px, #d0d0d0 29px 30px);
}
.closed .lanes {
  background:
    linear-gradient(90deg, transparent 89px, #a0a0a0 89px 90px, transparent 90px),
    linear-gradient(90deg, transparent 330px, #fff 330px),
    repeating-linear-gradient(90deg, #f0f0f0 0 28px, #fff 28px 29px, #d0d0d0 29px 30px);
}
.lanes > div { height: 30px; padding: 1px 0 0 91px; border-bottom: 1px solid #a0a0a0; }
.event { width: 352px; height: 27px; margin: 0; border: 1px solid #000; line-height: 25px; text-align: center; white-space: nowrap; }

.vscroll { width: 20px; border-left: 1px solid #a0a0a0; padding: 0 2px 0 1px; display: flex; flex-direction: column; background: #f0f0f0 content-box; }
.vscroll button { height: 17px; display: grid; place-items: center; }
.vscroll .thumb { height: 296px; background: #cdcdcd; margin-bottom: auto; }
.vscroll svg, .hscroll svg { width: 10px; height: 10px; fill: none; stroke: #505050; stroke-width: 2; }
.pfoot { flex: none; display: grid; grid-template-columns: 67px 162px minmax(0, 1fr) 67px 20px; height: 17px; }
.hscroll { width: 358px; height: 16px; margin-top: 1px; display: flex; background: #f0f0f0; }
.hscroll button { width: 17px; display: grid; place-items: center; }
.hscroll .thumb { width: 18px; background: #cdcdcd; margin-right: auto; }

/* Summary */
.summary { min-width: 0; display: flex; flex-direction: column; background: #eff7ff; border-bottom: 1px solid #a6a6a6; }
.tablebox { flex: 1; min-height: 0; background: #fff; border: solid #a9a9a9; border-width: 2px 0 1px 1px; }
table { width: 100%; table-layout: fixed; border-collapse: separate; border-spacing: 0; }
.w-name { width: 150px; }
.w-n { width: 45px; }
.w-q { width: 65px; }
.w-d { width: 45px; }
th, td { height: 30px; padding: 0 4px; text-align: center; border: solid #bdbdbd; border-width: 0 0 1px 1px; white-space: nowrap; }
th { background: #edf2fa; color: #404040; font-weight: 600; padding: 0; }
th.l, td.l { text-align: left; padding-left: 2px; }
td button { display: block; margin: auto; }
td svg { width: 24px; height: 16px; }
.bar { position: relative; height: 21px; background: #fffaf0; border: 1px solid #a9a9a9; }
.bar i { position: absolute; top: -1px; bottom: -1px; left: -1px; background: #9acd32; }
.bar span { position: relative; display: block; line-height: 20px; }
.actions { display: flex; gap: 20px; height: 50px; padding: 10px 0 0 13px; }
.actions svg { width: 32px; height: 32px; }

.status { display: flex; flex: none; height: 21px; padding-top: 1px; white-space: nowrap; }
.status div { padding: 0 8px 0 9px; line-height: 18px; border: solid #bdbdbd; border-width: 1px 1px 1px 0; }
.status .pen { display: grid; place-items: center; width: 31px; padding: 0; }
.pen svg { width: 10px; height: 10px; }
.status .version { flex: 1; text-align: right; }
```
